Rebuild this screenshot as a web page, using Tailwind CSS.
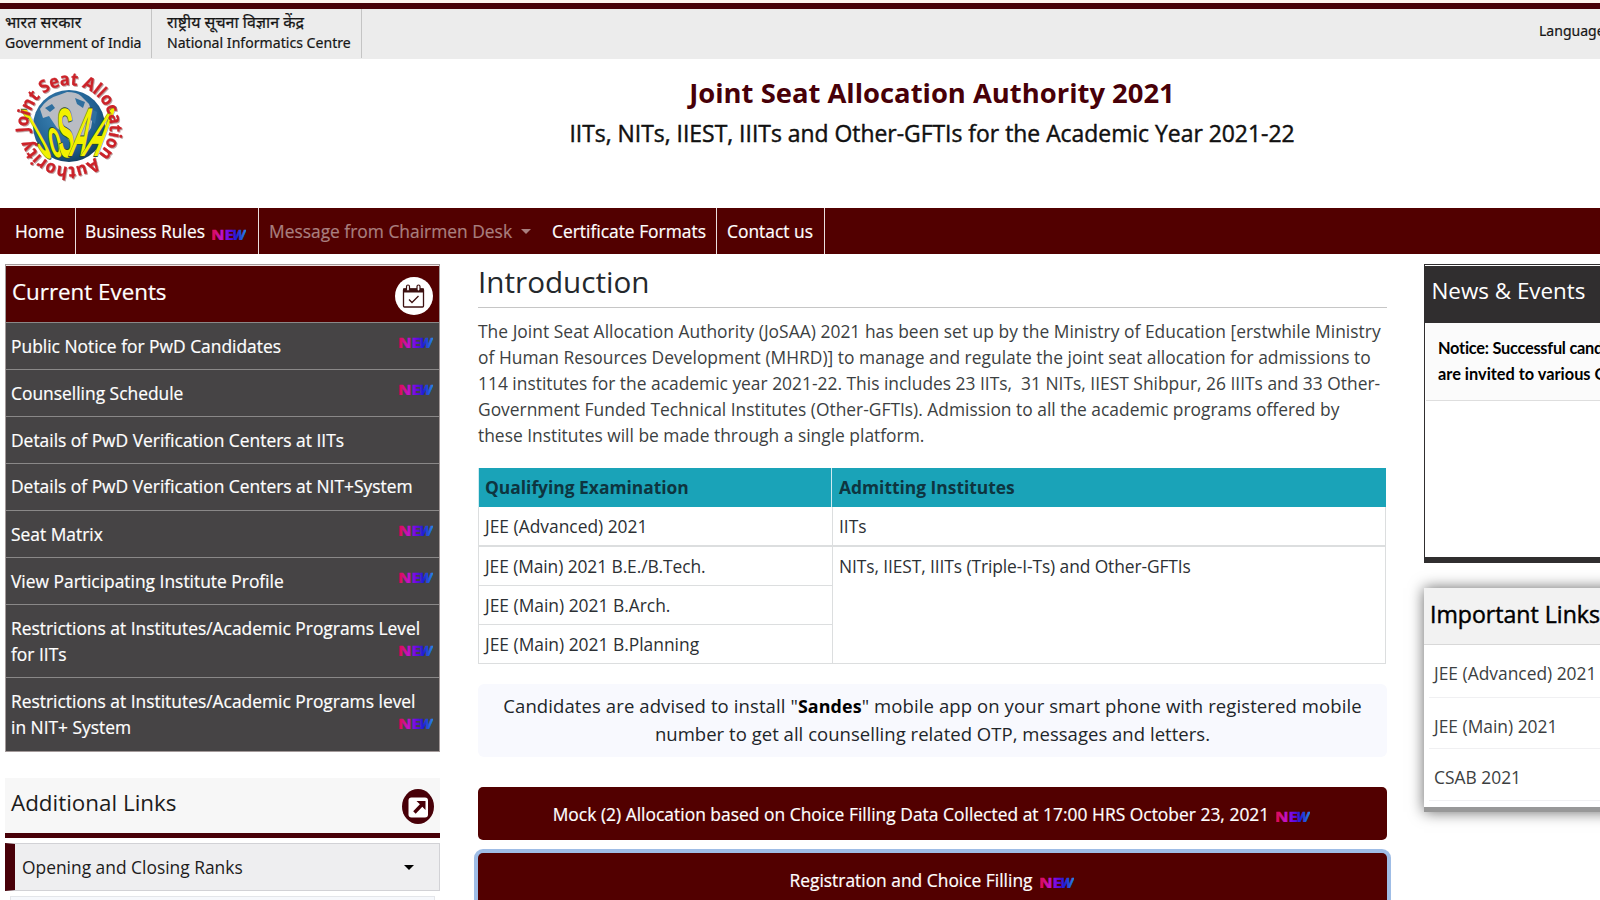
<!DOCTYPE html>
<html lang="en">
<head>
<meta charset="utf-8">
<title>Joint Seat Allocation Authority 2021</title>
<script src="https://cdn.jsdelivr.net/npm/@tailwindcss/browser@4"></script>
</head>
<body class="w-[1600px] h-[900px] overflow-hidden bg-white font-['Open_Sans',sans-serif] text-[17.4px] leading-[26px] text-[#3c3f42]">
<svg class="absolute w-0 h-0" aria-hidden="true">
  <defs>
    <linearGradient id="newg" gradientUnits="userSpaceOnUse" x1="0" y1="0" x2="34" y2="0">
      <stop offset="0" stop-color="#e00a4c"/><stop offset=".28" stop-color="#c412c8"/><stop offset=".5" stop-color="#6a08e8"/><stop offset=".72" stop-color="#1c20d8"/><stop offset="1" stop-color="#2a88e8"/>
    </linearGradient>
    <symbol id="new" viewBox="0 0 34 12">
      <g font-family="Open Sans, sans-serif" font-weight="700" font-size="15" fill="url(#newg)" stroke="url(#newg)" stroke-width=".6">
        <text x="-1" y="11.500" textLength="23" lengthAdjust="spacingAndGlyphs">NE</text>
        <text x="20.500" y="11.500" textLength="12.500" lengthAdjust="spacingAndGlyphs" font-style="italic">W</text>
      </g>
    </symbol>
  </defs>
</svg>

<div class="h-[3px] bg-[#fdf3ef]"></div>
<div class="h-[6px] bg-[#480008]"></div>
<div class="flex h-[50px] bg-[#ececec] font-['Noto_Sans',sans-serif] text-[14.050px] leading-[20px] text-[#161616] [-webkit-text-stroke:0.2px]">
  <div class="w-[152px] h-[49px] border-r border-[#c4c4c4] pl-[5px] pt-[3px]">
    <div class="text-[16px] leading-[21px] tracking-[0.1px]">भारत सरकार</div>
    <div class="tracking-[-0.03px]">Government of India</div>
  </div>
  <div class="w-[210px] h-[49px] border-r border-[#c4c4c4] pl-[15px] pt-[3px]">
    <div class="text-[16px] leading-[21px]">राष्ट्रीय सूचना विज्ञान केंद्र</div>
    <div class="tracking-[0.03px]">National Informatics Centre</div>
  </div>
  <div class="ml-auto w-[61px] overflow-hidden pt-[12px] whitespace-nowrap">Language</div>
</div>

<header class="flex h-[149px]">
  <svg class="ml-[9px] mt-[7px] w-[120px] h-[120px] shrink-0" viewBox="0 0 120 120">
    <defs>
      <radialGradient id="sea" cx=".4" cy=".35" r=".7"><stop offset="0" stop-color="#3f86b8"/><stop offset=".7" stop-color="#1f5f90"/><stop offset="1" stop-color="#123c5c"/></radialGradient>
      <path id="ring" d="M19.600 66 A40.500 40.500 0 0 1 100.400 54 A40.500 40.500 0 0 1 19.600 66"/>
    </defs>
    <circle cx="60" cy="60" r="36" fill="url(#sea)"/>
    <path d="M31 43 Q38 32 50 29 L58 26 Q68 26 72 30 L80 38 L84 50 L82 62 L74 74 L62 78 L56 68 L48 62 L40 50 L34 52 Z" fill="#b9bcc4"/>
    <path d="M36 42 L43 38 L46 42 L41 46 Z M66 32 L76 36 L74 42 L68 38 Z M80 42 L88 46 L86 58 L80 52 Z" fill="#2f6f9f"/>
    <g font-family="Liberation Sans, sans-serif" font-weight="700" fill="#f2f000" stroke="#2c4a30" stroke-width="2" paint-order="stroke">
      <text transform="translate(35 92) skewX(29) scale(.28 1)" font-size="70">J</text>
      <text transform="translate(43 91) skewX(12) scale(.38 1)" font-size="54">o</text>
      <text transform="translate(50 91) skewX(3) scale(.35 1)" font-size="70">S</text>
      <text transform="translate(59 90) skewX(-17) scale(.32 1)" font-size="69">A</text>
      <text transform="translate(71 90) skewX(-27) scale(.36 1)" font-size="70">A</text>
    </g>
    <text class="drop-shadow-[1px_1px_0.5px_rgba(120,60,60,0.5)]" font-family="Open Sans, sans-serif" font-weight="700" font-size="17.500" fill="#cc2229" stroke="#cc2229" stroke-width=".3"><textPath href="#ring" textLength="249" lengthAdjust="spacingAndGlyphs">Joint Seat Allocation Authority</textPath></text>
  </svg>
  <div class="ml-[135px] w-[1336px] pt-[15px] text-center shrink-0">
    <h1 class="text-[27.4px] leading-[38px] font-bold text-[#480008]">Joint Seat Allocation Authority 2021</h1>
    <h2 class="mt-[4px] text-[22.9px] leading-[36px] text-[#111] [-webkit-text-stroke:0.45px]">IITs, NITs, IIEST, IIITs and Other-GFTIs for the Academic Year 2021-22</h2>
  </div>
</header>

<nav class="flex h-[46px] bg-[#520000] text-white leading-[46px] whitespace-nowrap [-webkit-text-stroke:0.2px]">
  <a class="w-[76px] border-r border-[#eadede] pl-[15px]">Home</a>
  <a class="w-[183px] border-r border-[#eadede] pl-[9px] flex items-center">Business Rules<svg class="ml-[7px] mt-[5px] w-[34px] h-[12px] shrink-0"><use href="#new"/></svg></a>
  <a class="w-[293px] pl-[10px] flex items-center text-[#a97f7f]">Message from Chairmen Desk<span class="ml-[9px] border-x-[5.5px] border-x-transparent border-t-[5.5px] border-t-[#a97f7f]"></span></a>
  <a class="w-[165px] border-r border-[#eadede]">Certificate Formats</a>
  <a class="w-[108px] border-r border-[#eadede] pl-[10px]">Contact us</a>
</nav>

<main class="flex items-start h-[646px]">
  <aside class="ml-[5px] mt-[10px] w-[435px] shrink-0">
    <section class="border border-[#a39a9a] bg-[#464445] text-white [-webkit-text-stroke:0.2px]">
      <div class="flex h-[57px] justify-between border-t border-[#f3e6e6] bg-[#520000] pl-[6px] pr-[6px]">
        <h3 class="text-[22.350px] leading-[51px]">Current Events</h3>
        <svg class="mt-[11px] w-[38px] h-[38px]" viewBox="0 0 38 38" fill="none" stroke="#3c1010">
          <circle cx="19" cy="19" r="19" fill="#fff" stroke="none"/>
          <rect x="8.500" y="12" width="20" height="18" rx="1" stroke-width="1.300"/>
          <path d="M8 11.500h21v4H8z" fill="#3c1010" stroke="none"/>
          <rect x="11.500" y="8" width="3" height="6" rx="1.500" fill="#fff" stroke-width="1.200"/><rect x="22" y="8" width="3" height="6" rx="1.500" fill="#fff" stroke-width="1.200"/>
          <path d="M14 22.500l3 3 6.500-6.500" stroke-width="1.300"/>
        </svg>
      </div>
      <div class="flex h-[47px] justify-between border-t border-[#8a8888] pl-[5px] pr-[6px] leading-[46px]">Public Notice for PwD Candidates<svg class="mt-[13px] w-[34px] h-[12px]"><use href="#new"/></svg></div>
      <div class="flex h-[47px] justify-between border-t border-[#8a8888] pl-[5px] pr-[6px] leading-[46px]">Counselling Schedule<svg class="mt-[13px] w-[34px] h-[12px]"><use href="#new"/></svg></div>
      <div class="h-[47px] border-t border-[#8a8888] pl-[5px] leading-[46px]">Details of PwD Verification Centers at IITs</div>
      <div class="h-[47px] border-t border-[#8a8888] pl-[5px] leading-[45px]">Details of PwD Verification Centers at NIT+System</div>
      <div class="flex h-[47px] justify-between border-t border-[#8a8888] pl-[5px] pr-[6px] leading-[46px]">Seat Matrix<svg class="mt-[13px] w-[34px] h-[12px]"><use href="#new"/></svg></div>
      <div class="flex h-[47px] justify-between border-t border-[#8a8888] pl-[5px] pr-[6px] leading-[46px]">View Participating Institute Profile<svg class="mt-[13px] w-[34px] h-[12px]"><use href="#new"/></svg></div>
      <div class="flex h-[73px] items-start justify-between border-t border-[#8a8888] pl-[5px] pr-[6px] pt-[10px]"><span class="whitespace-nowrap w-[387px]">Restrictions at Institutes/Academic Programs Level<br>for IITs</span><svg class="mt-[29px] w-[34px] h-[12px] shrink-0"><use href="#new"/></svg></div>
      <div class="flex h-[73.500px] items-start justify-between border-t border-[#8a8888] pl-[5px] pr-[6px] pt-[10px]"><span class="whitespace-nowrap w-[387px]">Restrictions at Institutes/Academic Programs level<br>in NIT+ System</span><svg class="mt-[29px] w-[34px] h-[12px] shrink-0"><use href="#new"/></svg></div>
    </section>
    <section class="mt-[26.500px]">
      <div class="flex h-[60px] justify-between border-b-[5px] border-[#480008] bg-[#f7f7f7] pl-[6px] pr-[6px]">
        <h3 class="text-[22.400px] leading-[50px] text-[#1c1c1c]">Additional Links</h3>
        <svg class="mt-[11px] w-[32px] h-[35px]" viewBox="0 0 32 35">
          <ellipse cx="16" cy="17.500" rx="16" ry="17.500" fill="#480008"/>
          <rect x="6.500" y="8.500" width="19.500" height="20" rx="3" fill="#fff"/>
          <path d="M14.500 12h9v9l-3.200-3.200-6.600 6.900-2.500-2.500 6.700-6.900z" fill="#480008"/>
        </svg>
      </div>
      <div class="mt-[5px] flex h-[48px] items-center justify-between border border-l-[10px] border-[#d2d2d6] border-l-[#480008] bg-[#eeeef0] pl-[7px] pr-[25px] text-[#1c1c1c]">Opening and Closing Ranks<span class="border-x-[5.5px] border-x-transparent border-t-[5.5px] border-t-black"></span></div>
      <div class="mx-[5px] mt-[5px] h-[20px] border border-[#e4e6ea] bg-[#f6f8fc]"></div>
    </section>
  </aside>

  <section class="ml-[38px] w-[909px] shrink-0">
    <h2 class="h-[54px] border-b border-[#c6c6c6] text-[29.650px] leading-[56px] text-[#24282c]">Introduction</h2>
    <p class="mt-[10px] whitespace-nowrap"><span class="tracking-[0.034px]">The Joint Seat Allocation Authority (JoSAA) 2021 has been set up by the Ministry of Education [erstwhile Ministry</span><br><span class="tracking-[0.02px]">of Human Resources Development (MHRD)] to manage and regulate the joint seat allocation for admissions to</span><br>114 institutes for the academic year 2021-22. This includes 23 IITs,&nbsp; 31 NITs, IIEST Shibpur, 26 IIITs and 33 Other-<br>Government Funded Technical Institutes (Other-GFTIs). Admission to all the academic programs offered by<br>these Institutes will be made through a single platform.</p>
    <div class="mt-[20px] w-[908px] text-[#2c3034]">
      <div class="grid h-[39px] grid-cols-[353px_554px] bg-[#1aa3b8] leading-[39px] font-bold text-[#0e3540] border-l border-[#cfeaf0]">
        <div class="border-r border-[#cfeaf0] pl-[6px]">Qualifying Examination</div><div class="pl-[7px]">Admitting Institutes</div>
      </div>
      <div class="grid grid-cols-[354px_552px] border-x border-b border-[#dcdedf] leading-[38px]">
        <div class="h-[40px] border-r border-b-2 border-[#dcdedf] pl-[6px]">JEE (Advanced) 2021</div>
        <div class="h-[40px] border-b-2 border-[#dcdedf] pl-[6px]">IITs</div>
        <div class="border-r border-[#dcdedf]">
          <div class="h-[39px] border-b border-[#dcdedf] pl-[6px] tracking-[-0.09px]">JEE (Main) 2021 B.E./B.Tech.</div>
          <div class="h-[39px] border-b border-[#dcdedf] pl-[6px]">JEE (Main) 2021 B.Arch.</div>
          <div class="h-[38px] pl-[6px]">JEE (Main) 2021 B.Planning</div>
        </div>
        <div class="pl-[6px] tracking-[-0.1px]">NITs, IIEST, IIITs (Triple-I-Ts) and Other-GFTIs</div>
      </div>
    </div>
    <div class="mt-[20px] h-[73px] rounded-md bg-[#f8f9fe] pt-[8px] text-center text-[18.500px] leading-[28px] whitespace-nowrap text-[#212529]"><span class="tracking-[0.1px]">Candidates are advised to install "<b class="text-[17.900px] text-black">Sandes</b>" mobile app on your smart phone with registered mobile</span><br><span class="tracking-[0.03px]">number to get all counselling related OTP, messages and letters.</span></div>
    <div class="mt-[30px] flex h-[53px] items-center justify-center rounded-[5px] bg-[#520000] pr-[2px] text-white tracking-[0.02px] [-webkit-text-stroke:0.2px]">Mock (2) Allocation based on Choice Filling Data Collected at 17:00 HRS October 23, 2021<svg class="ml-[7px] mt-[5px] w-[34px] h-[12px]"><use href="#new"/></svg></div>
    <div class="mt-[13px] flex h-[53px] items-center justify-center rounded-[5px] bg-[#520000] pr-[2px] text-white ring-4 ring-[#9fbde6] [-webkit-text-stroke:0.2px]">Registration and Choice Filling<svg class="ml-[7px] mt-[5px] w-[34px] h-[12px]"><use href="#new"/></svg></div>
  </section>

  <aside class="ml-[37px] mt-[10px] w-[260px] shrink-0 whitespace-nowrap">
    <section class="h-[299px] border border-b-[6px] border-[#302e2f]">
      <h3 class="mt-px h-[57px] bg-[#302e2f] pl-[6.500px] text-[22.400px] leading-[50px] text-white">News &amp; Events</h3>
      <div class="ml-px h-[78px] border-b border-[#dedede] bg-[#fbfbfb] pl-[12px] pt-[12px] font-['Lato',sans-serif] text-[16.350px] font-bold text-black"><span class="tracking-[-0.25px]">Notice: Successful candidates</span><br>are invited to various Online</div>
    </section>
    <section class="mt-[25px] h-[224px] border-b-[5px] border-[#989898] bg-white shadow-[0_0_14px_rgba(0,0,0,0.6)]">
      <h3 class="h-[57px] border-b border-[#d8d8d8] bg-[#f2f2f2] pl-[6px] text-[23.100px] leading-[53px] text-black [-webkit-text-stroke:0.45px]">Important Links</h3>
      <div class="ml-[5px] h-[53px] border-b border-[#f0f0f2] pl-[5px] leading-[56px]">JEE (Advanced) 2021</div>
      <div class="ml-[5px] h-[51px] border-b border-[#f0f0f2] pl-[5px] leading-[56px]">JEE (Main) 2021</div>
      <div class="ml-[5px] h-[52px] border-b border-[#f0f0f2] pl-[5px] leading-[56px]">CSAB 2021</div>
    </section>
  </aside>
</main>
</body>
</html>
